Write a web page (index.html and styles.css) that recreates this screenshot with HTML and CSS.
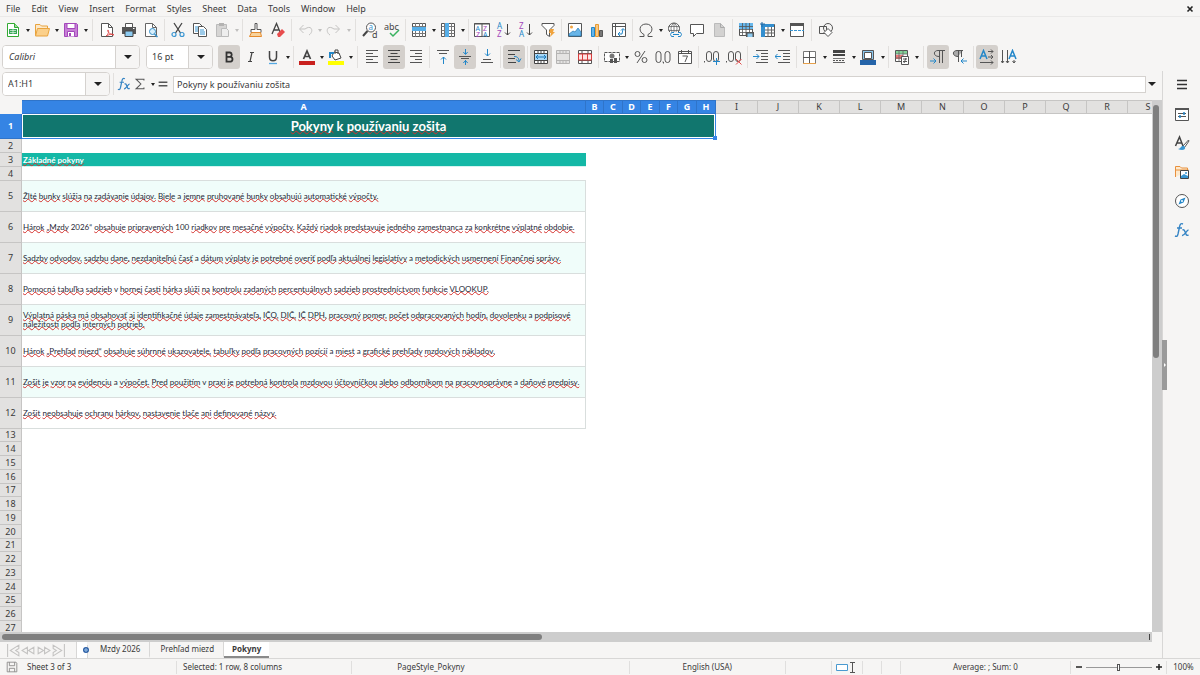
FILE: index.html
```html
<!DOCTYPE html>
<html lang="en">
<head>
<meta charset="utf-8">
<title>Pokyny</title>
<link rel="stylesheet" href="styles.css">
</head>
<body>
<svg class="sprite" aria-hidden="true">
  <symbol id="new" viewBox="0 0 16 16"><path d="M2.500 1.500h7l4 4v9h-11z" fill="#fff" stroke="#3a3" /><path d="M9.500 1.500v4h4" fill="#9d9" stroke="#3a3"/><path d="M4 7h8v5H4z" fill="#35a854"/><path d="M5 8.500h6M5 10.500h6M8 7v5" stroke="#fff" stroke-width=".6"/></symbol>
  <symbol id="open" viewBox="0 0 16 16"><path d="M1.500 13V2.500H6L7.500 4h6v3" fill="#fce8c8" stroke="#e8a33d"/><path d="M3.500 6.500h12l-2 7.500H1.500z" fill="#fbd08b" stroke="#e8a33d"/></symbol>
  <symbol id="save" viewBox="0 0 16 16"><path d="M1.500 1.500h12l1 1v12h-13z" fill="#c77fd6" stroke="#a347ba"/><path d="M4 1.500h8v5H4z" fill="#fff" stroke="#a347ba"/><path d="M4.500 14.500v-5h7v5" fill="#fff" stroke="#a347ba"/><path d="M6 11h2v3H6z" fill="#a347ba"/></symbol>
  <symbol id="pdf" viewBox="0 0 16 16"><path d="M2.500 1.500h7l4 4v9h-11z" fill="#fff" stroke="#555"/><path d="M9.500 1.500v4h4" fill="none" stroke="#555"/><path d="M7 14c3-2 3-6 2-6s0 4 6 5c-2-2-6 0-7 1" fill="none" stroke="#e04b4b"/></symbol>
  <symbol id="print" viewBox="0 0 16 16"><path d="M4.500 5V1.500h7V5" fill="#fff" stroke="#555"/><path d="M1 5h14v7H1z" fill="#555"/><path d="M4 9h8v5.500H4z" fill="#8ccaf0" stroke="#444"/><path d="M12 6.500h1.500" stroke="#fff"/></symbol>
  <symbol id="preview" viewBox="0 0 16 16"><path d="M2.500 1.500h7l4 4v9h-11z" fill="#fff" stroke="#666"/><path d="M9.500 1.500v4h4" fill="none" stroke="#666"/><circle cx="9.500" cy="9.500" r="3" fill="#d8effc" stroke="#368fc9"/><path d="M11.500 12l3 3" stroke="#368fc9" stroke-width="1.500"/></symbol>
  <symbol id="cut" viewBox="0 0 16 16"><path d="M4 1l6.500 10M12 1L5.500 11" stroke="#444" fill="none" stroke-width="1.300"/><circle cx="4" cy="12.500" r="2" fill="none" stroke="#3a96d2" stroke-width="1.200"/><circle cx="12" cy="12.500" r="2" fill="none" stroke="#3a96d2" stroke-width="1.200"/></symbol>
  <symbol id="copy" viewBox="0 0 16 16"><path d="M1.500 1.500h6l3 3v7h-9z" fill="#fff" stroke="#555"/><path d="M6.500 4.500h5l3 3v7h-8z" fill="#fff" stroke="#555"/><path d="M3 5h3M3 7h3M3 9h3M8 8h4M8 10h5M8 12h5" stroke="#3a96d2"/></symbol>
  <symbol id="paste" viewBox="0 0 16 16"><path d="M2.500 2.500h10v12h-10z" fill="#d6d5d4" stroke="#bbb"/><path d="M5 1h5v3H5z" fill="#b4b3b2"/><path d="M7.500 6.500h5l2 2v6h-7z" fill="#eee" stroke="#bbb"/></symbol>
  <symbol id="brush" viewBox="0 0 16 16"><path d="M7 1.500h2v6h4v3H3v-3h4z" fill="#fff" stroke="#555"/><path d="M3.500 10.500h9l1 4h-12z" fill="#f8d39c" stroke="#e58b2d"/></symbol>
  <symbol id="clear" viewBox="0 0 16 16"><path d="M2 12L6.500 1.500 10 10M3.500 8h5" fill="none" stroke="#444" stroke-width="1.300"/><path d="M7 12l5-5 3 3-5 5H8z" fill="#e84d4d"/></symbol>
  <symbol id="undo" viewBox="0 0 16 16"><path d="M6.500 3L2.500 7l4 4M3 7h5c7-5 9 3 4 6" fill="none" stroke="#c4c3c2"/></symbol>
  <symbol id="redo" viewBox="0 0 16 16"><path d="M9.500 3l4 4-4 4M13 7H8C1 2-1 10 4 13" fill="none" stroke="#c4c3c2"/></symbol>
  <symbol id="find" viewBox="0 0 16 16"><circle cx="9" cy="5.500" r="4.500" fill="#fff" stroke="#555"/><path d="M5.500 9L1 14" stroke="#444" stroke-width="2"/><text x="6.500" y="8" font-size="8" fill="#3a96d2">a</text><text x="10" y="15.500" font-size="9" fill="#444">d</text></symbol>
  <symbol id="spell" viewBox="0 0 16 16"><text x="0" y="8" font-size="9" fill="#444">abc</text><path d="M6 11l3 3 6-6" fill="none" stroke="#38b25f" stroke-width="1.500"/></symbol>
  <symbol id="row" viewBox="0 0 16 16"><path d="M1.500 1.500h13v13h-13z" fill="#fff" stroke="#555"/><path d="M1.500 4.500h13M1.500 11.500h13M4.500 1v14M8.500 1v14M11.500 1v14" stroke="#777"/><path d="M1 5h14v4H1z" fill="#56aee8"/></symbol>
  <symbol id="col" viewBox="0 0 16 16"><path d="M1.500 1.500h13v13h-13z" fill="#fff" stroke="#555"/><path d="M1.500 4.500h13M1.500 8.500h13M1.500 11.500h13M4.500 1v14M11.500 1v14" stroke="#777"/><path d="M5 1h4v14H5z" fill="#56aee8"/></symbol>
  <symbol id="sort" viewBox="0 0 16 16"><path d="M.5 1.500h15v13H.5zM8 1v14M0 2h16" fill="#fff" stroke="#555"/><text x="1.500" y="8.500" font-size="7" fill="#2387c9">A</text><text x="9" y="8.500" font-size="7" fill="#a347ba">Z</text><text x="2" y="14.500" font-size="7" fill="#a347ba">Z</text><text x="9" y="14.500" font-size="7" fill="#2387c9">A</text></symbol>
  <symbol id="asc" viewBox="0 0 16 16"><text x="1" y="7" font-size="8" fill="#2387c9">A</text><text x="1" y="15" font-size="8" fill="#a347ba">Z</text><path d="M11.500 2v11M9 10.500l2.500 2.500 2.500-2.500" fill="none" stroke="#444"/></symbol>
  <symbol id="desc" viewBox="0 0 16 16"><text x="1" y="7" font-size="8" fill="#a347ba">Z</text><text x="1" y="15" font-size="8" fill="#2387c9">A</text><path d="M11.500 2v11M9 10.500l2.500 2.500 2.500-2.500" fill="none" stroke="#444"/></symbol>
  <symbol id="filter" viewBox="0 0 16 16"><path d="M2 1.500h12v2L9.500 8v6.500l-3-2V8L2 3.500z" fill="#fff" stroke="#555"/><path d="M10 7h4l-1 3h2l-5 5 1-4H9z" fill="#f0a33d"/></symbol>
  <symbol id="image" viewBox="0 0 16 16"><path d="M1.500 1.500h13v13h-13z" fill="#fff" stroke="#555"/><circle cx="4.500" cy="5" r="1.500" fill="#f1a340"/><path d="M2 14v-2l4-3 2 1 3-4 3 4v4z" fill="#68b5e8" stroke="#2778b5" stroke-width=".7"/></symbol>
  <symbol id="chart" viewBox="0 0 16 16"><path d="M2.500 5.500h3v9h-3z" fill="#65b5eb" stroke="#2387c9"/><path d="M6.500 2.500h3v12h-3z" fill="#f9c985" stroke="#e69a32"/><path d="M10.500 8.500h3v6h-3z" fill="#777" stroke="#555"/></symbol>
  <symbol id="pivot" viewBox="0 0 16 16"><path d="M1.500 1.500h13v13h-13z" fill="#fff" stroke="#555"/><path d="M1.500 4.500h13M4.500 1.500v13" stroke="#555"/><path d="M7 12h4l1-5M10 8.500l2-2 2 2M9 10l-2 2 2 2" fill="none" stroke="#2387c9"/></symbol>
  <symbol id="omega" viewBox="0 0 16 16"><path d="M1.500 14.500H6v-2C0 10 1 2 8 2s8 8 2 10.500v2h4.500" fill="none" stroke="#555"/></symbol>
  <symbol id="link" viewBox="0 0 16 16"><circle cx="7" cy="6.500" r="5.500" fill="#fff" stroke="#555"/><path d="M1.500 4.500h11M1.500 8.500h11M7 1v11M7 1C3 4 3 9 7 12M7 1c4 3 4 8 0 11" fill="none" stroke="#666" stroke-width=".8"/><path d="M2 10h14v5H2z" fill="#f6f5f4"/><path d="M7 10.500H4.500q-2 2 0 4H7M11 10.500h2.500q2 2 0 4H11M6 12.500h6" fill="none" stroke="#2387c9"/></symbol>
  <symbol id="comment" viewBox="0 0 16 16"><path d="M1.500 2.500h13v9h-7L4.500 14.500v-3h-3z" fill="#fff" stroke="#555"/></symbol>
  <symbol id="page" viewBox="0 0 16 16"><path d="M3.500 1.500h6l4 4v9h-10z" fill="#d3d2d1" stroke="#bbb"/><path d="M9.500 1.500v4h4" fill="none" stroke="#aaa"/></symbol>
  <symbol id="parea" viewBox="0 0 16 16"><path d="M1.500 1.500h13v12h-13z" fill="#fff" stroke="#555"/><path d="M1 1h14v6H1z" fill="#67b7ec"/><path d="M1 4.500h14M1 7.500h14M1 10.500h14M4.500 1v13M8 1v13M11.500 1v13" stroke="#555" stroke-width=".8"/><path d="M8 10h8v5H8z" fill="#555"/><path d="M9.500 11.500h5V15h-5z" fill="#8ccaf0"/></symbol>
  <symbol id="freeze" viewBox="0 0 16 16"><path d="M1.500 2.500h13v12h-13z" fill="#fff" stroke="#555"/><path d="M1 2h13v3H1zM1 2h4v13H1z" fill="#348fcf"/><path d="M5 8h10M5 11h10M8 5v10M11.500 5v10" stroke="#666"/><path d="M2 0v5M0 2h5" stroke="#2068a5"/></symbol>
  <symbol id="split" viewBox="0 0 16 16"><path d="M1.500 1.500h13v13h-13z" fill="#fff" stroke="#555"/><path d="M1 1h14v3H1z" fill="#555"/><path d="M1 8.500h14" stroke="#3a96d2" stroke-dasharray="3 1"/></symbol>
  <symbol id="shapes" viewBox="0 0 16 16"><circle cx="10" cy="6" r="4.500" fill="#f6f5f4" stroke="#555"/><path d="M1.500 4.500h7v7h-7z" fill="none" stroke="#555"/><path d="M10 6.500l4 4-4 4-4-4z" fill="#fff" stroke="#555"/></symbol>
  <symbol id="bold" viewBox="0 0 16 16"><path d="M5.500 3.500H9a2.200 2.200 0 010 4.300H5.500zM5.500 7.800h4a2.500 2.500 0 010 4.900h-4z" fill="none" stroke="#333" stroke-width="1.800"/></symbol>
  <symbol id="italic" viewBox="0 0 16 16"><path d="M7 3.500h4M5 12.500h4M9 3.500l-2 9" fill="none" stroke="#444" stroke-width="1.200"/></symbol>
  <symbol id="under" viewBox="0 0 16 16"><path d="M4.500 2v6c0 5 7 5 7 0V2" fill="none" stroke="#444" stroke-width="1.500"/><path d="M4 14.500h8" stroke="#55a9e3" stroke-width="1.300"/></symbol>
  <symbol id="fcolor" viewBox="0 0 16 16"><path d="M4.500 10L8 2l3.500 8M6 7.500h4" fill="none" stroke="#444" stroke-width="1.700"/><path d="M0 12h16v4H0z" fill="#c9211e"/></symbol>
  <symbol id="hcolor" viewBox="0 0 16 16"><path d="M6 3l5 1 2 5-6 2-3-4z" fill="#fff" stroke="#444"/><path d="M7 5V1h3v4" fill="none" stroke="#444"/><path d="M2 9V4h4" fill="none" stroke="#2387c9" stroke-width="2"/><path d="M0 12h16v4H0z" fill="#ff0"/></symbol>
  <symbol id="left" viewBox="0 0 16 16"><path d="M2 1.500h12M2 4.500h7M2 7.500h12M2 10.500h7M2 13.500h12" stroke="#555"/></symbol>
  <symbol id="center" viewBox="0 0 16 16"><path d="M2 1.500h12M4.500 4.500h7M2 7.500h12M4.500 10.500h7M2 13.500h12" stroke="#444"/></symbol>
  <symbol id="right" viewBox="0 0 16 16"><path d="M2 1.500h12M7 4.500h7M2 7.500h12M7 10.500h7M2 13.500h12" stroke="#555"/></symbol>
  <symbol id="top" viewBox="0 0 16 16"><path d="M2 1.500h12M4 4.500h8" stroke="#555"/><path d="M8.500 15V8M6 10.500L8.500 8l2.500 2.500" fill="none" stroke="#2387c9"/></symbol>
  <symbol id="middle" viewBox="0 0 16 16"><path d="M2 7.500h12M4 9.500h8" stroke="#555"/><path d="M8.500 0v5M6.300 3l2.200 2.500L10.700 3M8.500 16v-5M6.300 14l2.200-2.500 2.200 2.500" fill="none" stroke="#2387c9"/></symbol>
  <symbol id="bottom" viewBox="0 0 16 16"><path d="M4 10.500h8M2 13.500h12" stroke="#555"/><path d="M8.500 0v7M6 4.500L8.500 7 11 4.500" fill="none" stroke="#2387c9"/></symbol>
  <symbol id="wrap" viewBox="0 0 16 16"><path d="M2 1.500h12M2 5.500h7M2 9.500h7M2 13.500h8" stroke="#444"/><path d="M8 7.500c3 0 5 1 5 5M10 10.500l3 2.500 2-3.500" fill="none" stroke="#2387c9"/></symbol>
  <symbol id="merge" viewBox="0 0 16 16"><path d="M1.500 1.500h13v13h-13zM1.500 4.500h13M1.500 11.500h13M5 1v3M8 1v3M11 1v3M5 12v3M8 12v3M11 12v3" fill="#fff" stroke="#444"/><path d="M2 5h12v6H2z" fill="#a6d7f8"/><path d="M3 8h10M5 6L3 8l2 2M11 6l2 2-2 2" fill="none" stroke="#1977b8"/></symbol>
  <symbol id="merged" viewBox="0 0 16 16"><path d="M1.500 1.500h13v13h-13zM1.500 4.500h13M1.500 11.500h13M5 1v3M8 1v3M11 1v3M5 12v3M8 12v3M11 12v3" fill="#e4e3e2" stroke="#b5b4b3"/></symbol>
  <symbol id="unmerge" viewBox="0 0 16 16"><path d="M1.500 1.500h13v13h-13zM1.500 4.500h13M1.500 11.500h13M5 1v3M11 1v3M5 12v3M11 12v3" fill="#fff" stroke="#555"/><path d="M1.500 5h13v6h-13zM5.500 5v6M10.500 5v6" fill="#fde4e4" stroke="#d93d3d"/></symbol>
  <symbol id="money" viewBox="0 0 16 16"><path d="M.5 3.500h15v9H.5z" fill="#fff" stroke="#555" stroke-dasharray="3 1"/><circle cx="8" cy="7" r="2.500" fill="#777"/><path d="M6 10h3v4H6zM10 9h3v5h-3z" fill="#555"/></symbol>
  <symbol id="percent" viewBox="0 0 16 16"><circle cx="4.500" cy="5" r="2.500" fill="none" stroke="#555"/><circle cx="11.500" cy="11" r="2.500" fill="none" stroke="#555"/><path d="M12 2L4 14" stroke="#555"/></symbol>
  <symbol id="number" viewBox="0 0 16 16"><rect x="1" y="2.500" width="5" height="11" rx="2.500" fill="none" stroke="#555"/><rect x="10" y="2.500" width="5" height="11" rx="2.500" fill="none" stroke="#555"/><path d="M7.500 13h1v1.500" stroke="#555" fill="none"/></symbol>
  <symbol id="date" viewBox="0 0 16 16"><path d="M1.500 2.500h13v12h-13z" fill="#fff" stroke="#555"/><path d="M1 4.500h14M4.500 1v3M11.500 1v3" stroke="#555"/><path d="M5.500 7h5L8 13" fill="none" stroke="#555"/></symbol>
  <symbol id="decadd" viewBox="0 0 16 16"><path d="M.5 12v1.500" stroke="#555"/><rect x="2.500" y="2.500" width="5" height="10" rx="2.500" fill="none" stroke="#555"/><rect x="9.500" y="2.500" width="5" height="10" rx="2.500" fill="none" stroke="#555"/><path d="M9 12.500h7M12.500 9v7" stroke="#2387c9"/></symbol>
  <symbol id="decdel" viewBox="0 0 16 16"><path d="M.5 12v1.500" stroke="#555"/><rect x="2.500" y="2.500" width="5" height="10" rx="2.500" fill="none" stroke="#555"/><rect x="9.500" y="2.500" width="5" height="10" rx="2.500" fill="none" stroke="#555"/><path d="M10 10l5.500 5.500M15.500 10L10 15.500" stroke="#e34b4b"/></symbol>
  <symbol id="indent" viewBox="0 0 16 16"><path d="M3 1.500h12M8 4.500h7M8 7.500h7M8 10.500h7M3 13.500h12" stroke="#555"/><path d="M0 7.500h6M3.500 5L6 7.500 3.500 10" fill="none" stroke="#2387c9"/></symbol>
  <symbol id="outdent" viewBox="0 0 16 16"><path d="M3 1.500h12M8 4.500h7M8 7.500h7M8 10.500h7M3 13.500h12" stroke="#555"/><path d="M0 7.500h6M2.500 5L0 7.500 2.500 10" fill="none" stroke="#2387c9"/></symbol>
  <symbol id="borders" viewBox="0 0 16 16"><path d="M1.500 2.500h12v12h-12z" fill="#fff" stroke="#777"/><path d="M7.500 2v12M1 8.500h12" stroke="#555"/><path d="M1 14.500h13" stroke="#e6a04a"/></symbol>
  <symbol id="lines" viewBox="0 0 16 16"><path d="M2 2.500h12" stroke="#444" stroke-width="3"/><path d="M2 6h12" stroke="#444" stroke-width="2"/><path d="M2 9.500h12" stroke="#777"/><path d="M2 11.500h12" stroke="#555" stroke-dasharray="2 1"/><path d="M2 13.500h12" stroke="#666"/></symbol>
  <symbol id="bcolor" viewBox="0 0 16 16"><path d="M2.500 1.500h11v9h-11z" fill="#8bc8ef" stroke="#555"/><path d="M4.500 3.500h7v6h-7z" fill="#fff" stroke="#555"/><path d="M0 11h16v5H0z" fill="#2564a9"/></symbol>
  <symbol id="cond" viewBox="0 0 16 16"><path d="M1.500 1.500h12v11h-12z" fill="#fff" stroke="#555"/><path d="M2 2h11v3H2z" fill="#83d599"/><path d="M2 6h7v4H2z" fill="#e77"/><path d="M1 5h13M1 9h13M5 1v12M9 1v12" stroke="#666" stroke-width=".8"/><path d="M7.500 7.500h7v8h-7z" fill="#fff" stroke="#555"/><path d="M9 10h4M9 12.500h4M12 9l-2 5" stroke="#555"/></symbol>
  <symbol id="ltr" viewBox="0 0 16 16"><path d="M15 1.500H8c-5 0-5 6 1 6M9.500 1.500V14M12.500 1.500V14" fill="none" stroke="#555"/><path d="M0 12h6M3.500 9.500L6 12l-2.500 2.500" fill="none" stroke="#2387c9"/></symbol>
  <symbol id="rtl" viewBox="0 0 16 16"><path d="M11 1.500H5c-5 0-5 6 1 6z" fill="#aaa"/><path d="M11 1.500H5c-5 0-5 6 1 6M6.500 1.500V13M9.500 1.500V8" fill="none" stroke="#555"/><path d="M15 12H9M11.500 9.500L9 12l2.500 2.500" fill="none" stroke="#2387c9"/></symbol>
  <symbol id="horz" viewBox="0 0 16 16"><path d="M1 10L4.500 1.500 8 10M2.500 7h4" fill="none" stroke="#2387c9" stroke-width="1.500"/><path d="M9 2.500h5M12 .5l2 2-2 2M9 8h5M12 6l2 2-2 2M1 13.500h13M12 11.500l2 2-2 2" fill="none" stroke="#555"/></symbol>
  <symbol id="vert" viewBox="0 0 16 16"><path d="M8 10l3.500-8.500L15 10M9.500 7h4" fill="none" stroke="#2387c9" stroke-width="1.500"/><path d="M1.500 1v13M0 12l1.500 2L3 12M6.500 1v13M5 12l1.500 2L8 12M13 11v3M11.500 12l1.500 2 1.500-2" fill="none" stroke="#555"/></symbol>
  <symbol id="fx" viewBox="0 0 16 16"><path d="M9 2c-2-1-3 0-3.500 3L4 12c-.5 2-1 3-3 2M3 6h5M8.500 8c2-1 2 1 3 3s1 3 3 2M14.500 8c-2 0-4 6-6.500 5.500" fill="none" stroke="#3584c4" stroke-width="1.400"/></symbol>
  <symbol id="sum" viewBox="0 0 16 16"><path d="M12.500 4V2.500h-9L9 8l-5.500 5.500h9V12" fill="none" stroke="#555" stroke-width="1.200"/></symbol>
  <symbol id="equal" viewBox="0 0 16 16"><path d="M3 6h10M3 10h10" stroke="#555" stroke-width="1.600"/></symbol>
  <symbol id="menu" viewBox="0 0 16 16"><path d="M3 3.500h10M3 7.500h10M3 11.500h10" stroke="#333" stroke-width="1.300"/></symbol>
  <symbol id="props" viewBox="0 0 16 16"><path d="M1.500 2.500h13v12h-13z" fill="#fff" stroke="#555"/><path d="M1 2h14v2H1z" fill="#555"/><path d="M4 7.500h8M4 10.500h8" stroke="#555"/><path d="M10 6v3M6 9v3" stroke="#2387c9" stroke-width="1.500"/></symbol>
  <symbol id="styles" viewBox="0 0 16 16"><path d="M1.500 11L5.500 2 9 11M3 8h5" fill="none" stroke="#444" stroke-width="1.500"/><path d="M14.500 5L9 11l1.500 1.500L15 6z" fill="#fff" stroke="#555"/><path d="M10 11c-3-1-3 3-6 3 4 2 8 1 7-2z" fill="#3a96d2"/></symbol>
  <symbol id="gallery" viewBox="0 0 16 16"><path d="M1.500 13V2.500H6L7.500 4h6v3M1.500 13V6h13" fill="#fde9cd" stroke="#e8903d"/><path d="M6.500 6.500h8v8h-8z" fill="#fff" stroke="#444"/><path d="M7 14v-2l3-2 4 2v2z" fill="#3a96d2"/><circle cx="12" cy="9" r="1" fill="#3a96d2"/></symbol>
  <symbol id="nav" viewBox="0 0 16 16"><circle cx="8" cy="8" r="6.500" fill="#fff" stroke="#555"/><path d="M11.500 4.500L9.500 9.500l-5 2 2-5z" fill="#2387c9"/><circle cx="8" cy="8" r="1" fill="#fff"/></symbol>
  <symbol id="floppy" viewBox="0 0 16 16"><path d="M2.500 2.500h10l1 1v10h-11zM5 2.500v4h6v-4M5 13.500v-4h6v4" fill="none" stroke="#8a8988"/></symbol>
  <symbol id="addtab" viewBox="0 0 16 16"><path d="M3 0h10v16H3z" fill="#fff"/><path d="M2.500 0v16M13.500 3v13" stroke="#d8d7d6"/><circle cx="12" cy="8" r="3" fill="#2c5fa5"/><path d="M12 6v4M10 8h4" stroke="#9cc3ea"/></symbol>
</svg>

<nav class="menubar" aria-label="Main menu">
  <button>File</button><button>Edit</button><button>View</button><button>Insert</button><button>Format</button><button>Styles</button><button>Sheet</button><button>Data</button><button>Tools</button><button>Window</button><button>Help</button>
  <button class="close" aria-label="Close document"><svg viewBox="0 0 8 8"><path d="M1.500 1.500l5 5M6.500 1.500l-5 5" stroke="#222" stroke-width="1.600"/></svg></button>
</nav>

<div class="toolbar standard" role="toolbar" aria-label="Standard">
  <button class="tool" aria-label="New"><svg><use href="#new"/></svg></button><button class="drop" aria-label="New options"></button>
  <button class="tool" aria-label="Open"><svg><use href="#open"/></svg></button><button class="drop" aria-label="Recent files"></button>
  <button class="tool" aria-label="Save"><svg><use href="#save"/></svg></button><button class="drop" aria-label="Save options"></button>
  <i class="sep wide"></i>
  <button class="tool" aria-label="Export as PDF"><svg><use href="#pdf"/></svg></button>
  <button class="tool" aria-label="Print"><svg><use href="#print"/></svg></button>
  <button class="tool" aria-label="Print preview"><svg><use href="#preview"/></svg></button>
  <i class="sep"></i>
  <button class="tool" aria-label="Cut"><svg><use href="#cut"/></svg></button>
  <button class="tool" aria-label="Copy"><svg><use href="#copy"/></svg></button>
  <button class="tool" aria-label="Paste"><svg><use href="#paste"/></svg></button><button class="drop off" aria-label="Paste options"></button>
  <i class="sep"></i>
  <button class="tool" aria-label="Clone formatting"><svg><use href="#brush"/></svg></button>
  <button class="tool" aria-label="Clear formatting"><svg><use href="#clear"/></svg></button>
  <i class="sep"></i>
  <button class="tool" aria-label="Undo"><svg><use href="#undo"/></svg></button><button class="drop off" aria-label="Undo list"></button>
  <button class="tool" aria-label="Redo"><svg><use href="#redo"/></svg></button><button class="drop off" aria-label="Redo list"></button>
  <i class="sep wide"></i>
  <button class="tool" aria-label="Find and replace"><svg><use href="#find"/></svg></button>
  <button class="tool" aria-label="Spelling"><svg><use href="#spell"/></svg></button>
  <i class="sep"></i>
  <button class="tool" aria-label="Row"><svg><use href="#row"/></svg></button><button class="drop" aria-label="Row options"></button>
  <button class="tool" aria-label="Column"><svg><use href="#col"/></svg></button><button class="drop" aria-label="Column options"></button>
  <i class="sep"></i>
  <button class="tool" aria-label="Sort"><svg><use href="#sort"/></svg></button>
  <button class="tool" aria-label="Sort ascending"><svg><use href="#asc"/></svg></button>
  <button class="tool" aria-label="Sort descending"><svg><use href="#desc"/></svg></button>
  <button class="tool" aria-label="AutoFilter"><svg><use href="#filter"/></svg></button>
  <i class="sep"></i>
  <button class="tool" aria-label="Image"><svg><use href="#image"/></svg></button>
  <button class="tool" aria-label="Chart"><svg><use href="#chart"/></svg></button>
  <button class="tool" aria-label="Pivot table"><svg><use href="#pivot"/></svg></button>
  <i class="sep"></i>
  <button class="tool" aria-label="Special character"><svg><use href="#omega"/></svg></button><button class="drop" aria-label="Character list"></button>
  <button class="tool" aria-label="Hyperlink"><svg><use href="#link"/></svg></button>
  <button class="tool" aria-label="Comment"><svg><use href="#comment"/></svg></button>
  <button class="tool" aria-label="Headers and footers"><svg><use href="#page"/></svg></button>
  <i class="sep"></i>
  <button class="tool" aria-label="Print area"><svg><use href="#parea"/></svg></button>
  <button class="tool" aria-label="Freeze"><svg><use href="#freeze"/></svg></button><button class="drop" aria-label="Freeze options"></button>
  <button class="tool" aria-label="Split window"><svg><use href="#split"/></svg></button>
  <i class="sep wide"></i>
  <button class="tool" aria-label="Draw functions"><svg><use href="#shapes"/></svg></button>
</div>

<div class="toolbar formatting" role="toolbar" aria-label="Formatting">
  <div class="combo font"><input type="text" value="Calibri" aria-label="Font name"><button class="drop large" aria-label="Font list"></button></div>
  <div class="combo size"><input type="text" value="16 pt" aria-label="Font size"><button class="drop large" aria-label="Size list"></button></div>
  <button class="tool on" aria-label="Bold"><svg><use href="#bold"/></svg></button>
  <button class="tool" aria-label="Italic"><svg><use href="#italic"/></svg></button>
  <button class="tool" aria-label="Underline"><svg><use href="#under"/></svg></button><button class="drop" aria-label="Underline options"></button>
  <i class="sep"></i>
  <button class="tool" aria-label="Font color"><svg><use href="#fcolor"/></svg></button><button class="drop" aria-label="Font colors"></button>
  <button class="tool" aria-label="Background color"><svg><use href="#hcolor"/></svg></button><button class="drop" aria-label="Background colors"></button>
  <i class="sep wide"></i>
  <button class="tool" aria-label="Align left"><svg><use href="#left"/></svg></button>
  <button class="tool on" aria-label="Center horizontally"><svg><use href="#center"/></svg></button>
  <button class="tool" aria-label="Align right"><svg><use href="#right"/></svg></button>
  <i class="sep"></i>
  <button class="tool" aria-label="Align top"><svg><use href="#top"/></svg></button>
  <button class="tool on" aria-label="Center vertically"><svg><use href="#middle"/></svg></button>
  <button class="tool" aria-label="Align bottom"><svg><use href="#bottom"/></svg></button>
  <i class="sep"></i>
  <button class="tool on" aria-label="Wrap text"><svg><use href="#wrap"/></svg></button>
  <i class="sep"></i>
  <button class="tool on" aria-label="Merge and center"><svg><use href="#merge"/></svg></button>
  <button class="tool" aria-label="Merge cells"><svg><use href="#merged"/></svg></button>
  <button class="tool" aria-label="Unmerge cells"><svg><use href="#unmerge"/></svg></button>
  <i class="sep"></i>
  <button class="tool" aria-label="Currency"><svg><use href="#money"/></svg></button><button class="drop" aria-label="Currencies"></button>
  <button class="tool" aria-label="Percent"><svg><use href="#percent"/></svg></button>
  <button class="tool" aria-label="Number"><svg><use href="#number"/></svg></button>
  <button class="tool" aria-label="Date"><svg><use href="#date"/></svg></button>
  <i class="sep"></i>
  <button class="tool" aria-label="Add decimal place"><svg><use href="#decadd"/></svg></button>
  <button class="tool" aria-label="Delete decimal place"><svg><use href="#decdel"/></svg></button>
  <i class="sep"></i>
  <button class="tool" aria-label="Increase indent"><svg><use href="#indent"/></svg></button>
  <button class="tool" aria-label="Decrease indent"><svg><use href="#outdent"/></svg></button>
  <i class="sep"></i>
  <button class="tool" aria-label="Borders"><svg><use href="#borders"/></svg></button><button class="drop" aria-label="Border list"></button>
  <button class="tool" aria-label="Border style"><svg><use href="#lines"/></svg></button><button class="drop" aria-label="Border styles"></button>
  <button class="tool" aria-label="Border color"><svg><use href="#bcolor"/></svg></button><button class="drop" aria-label="Border colors"></button>
  <i class="sep"></i>
  <button class="tool" aria-label="Conditional formatting"><svg><use href="#cond"/></svg></button><button class="drop" aria-label="Conditions"></button>
  <i class="sep wide"></i>
  <button class="tool on" aria-label="Left to right"><svg><use href="#ltr"/></svg></button>
  <button class="tool" aria-label="Right to left"><svg><use href="#rtl"/></svg></button>
  <i class="sep"></i>
  <button class="tool on" aria-label="Text direction horizontal"><svg><use href="#horz"/></svg></button>
  <button class="tool" aria-label="Text direction vertical"><svg><use href="#vert"/></svg></button>
</div>

<div class="workspace">
  <main class="document">
    <div class="formulabar">
      <div class="combo name"><input type="text" value="A1:H1" aria-label="Name box"><button class="drop large" aria-label="Named ranges"></button></div>
      <i class="sep"></i>
      <div class="formula-tools">
        <button aria-label="Function wizard"><svg><use href="#fx"/></svg></button>
        <button aria-label="Select function"><svg><use href="#sum"/></svg></button><button class="drop" aria-label="Function list"></button>
        <button aria-label="Formula"><svg><use href="#equal"/></svg></button>
      </div>
      <input class="formula" type="text" value="Pokyny k používaniu zošita" aria-label="Input line">
      <button class="drop large" aria-label="Expand formula bar"></button>
    </div>
    <div class="sheet-row">
      <div class="sheet">
        <table>
          <colgroup><col class="c-head"><col class="c-a"><col class="c-18"><col class="c-19"><col class="c-18"><col class="c-19"><col class="c-18"><col class="c-19"><col class="c-19"><col class="c-42"><col class="c-41"><col class="c-41"><col class="c-41"><col class="c-41"><col class="c-42"><col class="c-41"><col class="c-41"><col class="c-41"><col class="c-41"><col class="c-41"></colgroup>
          <thead><tr><td class="corner"></td><th class="sel">A</th><th class="sel">B</th><th class="sel">C</th><th class="sel">D</th><th class="sel">E</th><th class="sel">F</th><th class="sel">G</th><th class="sel">H</th><th>I</th><th>J</th><th>K</th><th>L</th><th>M</th><th>N</th><th>O</th><th>P</th><th>Q</th><th>R</th><th>S</th></tr></thead>
          <tbody>
            <tr class="r-title"><th class="sel">1</th><td class="title" colspan="8" data-spell>Pokyny k používaniu zošita</td></tr>
            <tr class="r-14"><th>2</th></tr>
            <tr class="r-14"><th>3</th><td class="section" data-spell>Základné pokyny</td></tr>
            <tr class="r-14"><th>4</th><td class="above"></td></tr>
            <tr class="r-note"><th>5</th><td class="note tint" data-spell>Žlté bunky slúžia na zadávanie údajov. Biele a jemne pruhované bunky obsahujú automatické výpočty.</td></tr>
            <tr class="r-note"><th>6</th><td class="note" data-spell>Hárok „Mzdy 2026“ obsahuje pripravených 100 riadkov pre mesačné výpočty. Každý riadok predstavuje jedného zamestnanca za konkrétne výplatné obdobie.</td></tr>
            <tr class="r-note"><th>7</th><td class="note tint" data-spell>Sadzby odvodov, sadzbu dane, nezdaniteľnú časť a dátum výplaty je potrebné overiť podľa aktuálnej legislatívy a metodických usmernení Finančnej správy.</td></tr>
            <tr class="r-note"><th>8</th><td class="note" data-spell>Pomocná tabuľka sadzieb v hornej časti hárka slúži na kontrolu zadaných percentuálnych sadzieb prostredníctvom funkcie VLOOKUP.</td></tr>
            <tr class="r-note"><th>9</th><td class="note tint" data-spell>Výplatná páska má obsahovať aj identifikačné údaje zamestnávateľa, IČO, DIČ, IČ DPH, pracovný pomer, počet odpracovaných hodín, dovolenku a podpisové náležitosti podľa interných potrieb.</td></tr>
            <tr class="r-note"><th>10</th><td class="note" data-spell>Hárok „Prehľad miezd“ obsahuje súhrnné ukazovatele, tabuľky podľa pracovných pozícií a miest a grafické prehľady mzdových nákladov.</td></tr>
            <tr class="r-note"><th>11</th><td class="note tint" data-spell>Zošit je vzor na evidenciu a výpočet. Pred použitím v praxi je potrebná kontrola mzdovou účtovníčkou alebo odborníkom na pracovnoprávne a daňové predpisy.</td></tr>
            <tr class="r-note"><th>12</th><td class="note" data-spell>Zošit neobsahuje ochranu hárkov, nastavenie tlače ani definované názvy.</td></tr>
            <tr class="r-13"><th>13</th></tr><tr class="r-14"><th>14</th></tr><tr class="r-14"><th>15</th></tr><tr class="r-14"><th>16</th></tr>
            <tr class="r-13"><th>17</th></tr><tr class="r-14"><th>18</th></tr><tr class="r-14"><th>19</th></tr><tr class="r-14"><th>20</th></tr>
            <tr class="r-13"><th>21</th></tr><tr class="r-14"><th>22</th></tr><tr class="r-14"><th>23</th></tr><tr class="r-14"><th>24</th></tr>
            <tr class="r-13"><th>25</th></tr><tr class="r-14"><th>26</th></tr><tr class="r-14"><th>27</th></tr>
          </tbody>
        </table>
      </div>
      <div class="vscroll"><div class="thumb"></div></div>
    </div>
    <div class="hscroll"><div class="thumb"></div><i class="stop"></i></div>
    <div class="tabs">
      <div class="tabnav">
        <button aria-label="First sheet"><svg viewBox="0 0 14 14"><path d="M1.500 1v12M12 2L4 7l8 5V9L9 7l3-2z"/></svg></button><button aria-label="Previous sheet"><svg viewBox="0 0 14 14"><path d="M6 4L1 7l5 3zM12 4L7 7l5 3z"/></svg></button><button aria-label="Next sheet"><svg viewBox="0 0 14 14"><path d="M2 4l5 3-5 3zM8 4l5 3-5 3z"/></svg></button><button aria-label="Last sheet"><svg viewBox="0 0 14 14"><path d="M12.500 1v12M2 2l8 5-8 5V9l3-2-3-2z"/></svg></button>
      </div>
      <button class="add" aria-label="Add sheet"><svg><use href="#addtab"/></svg></button>
      <button class="tab">Mzdy 2026</button><button class="tab">Prehľad miezd</button><button class="tab active">Pokyny</button>
    </div>
  </main>
  <aside class="sidebar">
    <button class="grip" aria-label="Hide sidebar"></button>
    <button aria-label="Sidebar settings"><svg><use href="#menu"/></svg></button>
    <button aria-label="Properties"><svg><use href="#props"/></svg></button>
    <button aria-label="Styles"><svg><use href="#styles"/></svg></button>
    <button aria-label="Gallery"><svg><use href="#gallery"/></svg></button>
    <button aria-label="Navigator"><svg><use href="#nav"/></svg></button>
    <button aria-label="Functions"><svg><use href="#fx"/></svg></button>
  </aside>
</div>

<footer class="status">
  <div class="s-doc"><svg><use href="#floppy"/></svg><span>Sheet 3 of 3</span></div>
  <div class="s-selected">Selected: 1 row, 8 columns</div>
  <div class="s-style">PageStyle_Pokyny</div>
  <div class="s-lang">English (USA)</div>
  <div class="s-insert"></div>
  <div class="s-mode"><svg viewBox="0 0 24 12"><path d="M1.500 3.500h11v6h-11z" fill="#fff" stroke="#4a9ad0"/><path d="M15 1.500h5M15 11.500h5M17.500 1.500v10" stroke="#555"/></svg></div>
  <div class="s-blank"></div>
  <div class="s-blank"></div>
  <div class="s-sum">Average: ; Sum: 0</div>
  <div class="s-zoom"><button aria-label="Zoom out"><svg viewBox="0 0 8 8"><path d="M1 4h6" stroke="#222" stroke-width="1.500"/></svg></button><input type="range" min="0" max="200" value="100" aria-label="Zoom"><button aria-label="Zoom in"><svg viewBox="0 0 8 8"><path d="M1 4h6M4 1v6" stroke="#222" stroke-width="1.500"/></svg></button></div>
  <div class="s-pct">100%</div>
</footer>
<script src="script.js"></script>
</body>
</html>
```

FILE: styles.css
```css
* { box-sizing: border-box; }

body {
  margin: 0;
  height: 100vh;
  display: flex;
  flex-direction: column;
  overflow: hidden;
  background: #f6f5f4;
  color: #3a3a3a;
  font-family: "Noto Sans", sans-serif;
  font-size: 9px;
  line-height: 12px;
}

button, input { font: inherit; color: inherit; }
button { border: 0; padding: 0; background: none; display: flex; align-items: center; justify-content: center; flex: none; }
input { min-width: 0; outline: 0; }
svg { width: 16px; height: 16px; display: block; flex: none; }
.sprite { display: none; }

.menubar { display: flex; align-items: center; gap: 11px; height: 17px; padding: 1px 6px 0; border-bottom: 1px solid #eae9e8; }
.menubar .close { margin-left: auto; }
.menubar .close svg { width: 8px; height: 8px; }

.toolbar { display: flex; align-items: center; height: 27px; padding: 0 0 1px 2px; }
.tool { width: 22px; height: 24px; border-radius: 3px; }
.tool.on { background: #d4d0cc; }
.drop { width: 7px; height: 22px; }
.drop::after { content: ""; border: 2px solid transparent; border-top: 3px solid #222; border-bottom: 0; }
.drop.off::after { border-top-color: #c0bfbe; }
.drop.large { width: 24px; }
.drop.large::after { border-width: 4px 4px 0; }
.sep { width: 5px; height: 22px; flex: none; display: flex; justify-content: center; }
.sep::after { content: ""; width: 1px; background: #e2e0de; }
.sep.wide { width: 7px; }

.combo { display: flex; height: 24px; border: 1px solid #d5d2cf; border-radius: 4px; background: #fff; overflow: hidden; flex: none; }
.combo input { flex: 1; border: 0; padding: 0 5px; background: #fff; }
.combo .drop { border-left: 1px solid #d5d2cf; background: #f6f5f4; }
.combo.font { width: 138px; margin-right: 6px; }
.combo.font input { font-style: italic; padding: 0 6px; }
.combo.size { width: 67px; margin-right: 5px; }
.combo.name { width: 108px; }

.workspace { flex: 1; min-height: 0; display: flex; }
.document { flex: 1; min-width: 0; display: flex; flex-direction: column; }
.formulabar { height: 29px; padding: 0 0 3px 2px; display: flex; align-items: center; flex: none; }
.formulabar > .sep { margin: 0 1px; }
.formula-tools { display: flex; align-items: center; width: 56px; }
.formula-tools button:nth-child(2) { margin: 0 2px; }
.formula-tools svg { width: 14px; height: 14px; }
.formula { flex: 1; height: 17px; border: 1px solid #d5d2cf; background: #fff; padding: 0 3px; }
.formulabar > .drop { width: 16px; padding-right: 4px; }

.sheet-row { flex: 1; min-height: 0; display: flex; }
.sheet { flex: 1; min-width: 0; overflow: hidden; background: #fff; }
table { table-layout: fixed; border-collapse: separate; border-spacing: 0; width: 1169px; line-height: 10px; }
th, td { padding: 0; }
th { background: #e2e1e0; border-right: 1px solid #c6c5c4; border-bottom: 1px solid #c6c5c4; font-weight: 400; }
thead tr { height: 14px; }
thead th { border-top: 1px solid #c6c5c4; }
th.sel { background: #3584e4; border-color: #2f74c9; color: #fff; font-weight: 700; }
.corner { background: #f6f5f4; }
.c-head { width: 22px; }
.c-a { width: 564px; }
.c-18 { width: 18px; }
.c-19 { width: 19px; }
.c-41 { width: 41px; }
.c-42 { width: 42px; }
.r-title { height: 25px; }
.r-14 { height: 14px; }
.r-13 { height: 13px; }
.r-note { height: 31px; }
.title, .section, .note { font-family: Lato, sans-serif; }
.title { position: relative; background: #11766e; color: #fff; font-size: 13px; line-height: 16px; font-weight: 700; text-align: center; border: solid #3584e4; border-width: 0 1px 1px 0; box-shadow: inset 0 0 0 1px #fff; }
.title::after { content: ""; position: absolute; right: -2px; bottom: -2px; width: 4px; height: 4px; background: #3584e4; }
.section { background: #14b8a6; background-clip: padding-box; color: #fff; font-size: 8px; font-weight: 700; padding-left: 1px; border-bottom: 1px solid #d5f4f0; }
.above { border-bottom: 1px solid #d9dedd; }
.note { font-size: 8px; line-height: 9px; color: #1f2937; padding-left: 1px; border: solid #d9dedd; border-width: 0 1px 1px 0; }
.tint { background: #f0fdfa; }
.misspelt { text-decoration: underline wavy #d5302c 1px; text-underline-offset: -1px; text-decoration-skip-ink: none; }

.vscroll { width: 10px; padding: 5px 2px 0 1px; background: #cdcdcd; }
.vscroll .thumb { width: 6px; height: 48%; border-radius: 3px; background: #7f7f7f; }
.hscroll { height: 10px; margin-right: 10px; padding: 2px; display: flex; justify-content: space-between; background: #cdcdcd; flex: none; }
.hscroll .thumb { width: 47%; height: 6px; border-radius: 3px; background: #7f7f7f; }
.hscroll .stop { width: 1px; background: #444; }

.tabs { height: 16px; display: flex; flex: none; font-size: 8px; }
.tabnav { display: flex; width: 66px; padding-left: 6px; }
.tabnav svg { width: 15px; height: 15px; fill: none; stroke: #c4c3c2; }
.add { width: 24px; margin-left: 4px; }
.add svg { width: 16px; height: 16px; }
.tab { padding: 0 9px 0 10px; border-right: 1px solid #d8d7d6; border-bottom: 2px solid transparent; }
.add + .tab { padding-left: 6px; }
.tab.active { padding: 0 8px; background: #fff; font-weight: 700; border-right: 0; border-bottom-color: #8a8a8a; }

.sidebar { position: relative; width: 38px; border-left: 1px solid #d8d7d6; display: flex; flex-direction: column; align-items: center; gap: 5px; flex: none; }
.sidebar button:not(.grip) { width: 24px; height: 24px; padding-top: 3px; }
.grip { position: absolute; left: -1px; top: calc(50% - 25px); width: 5px; height: 50px; background: #9a9a9a; }
.grip::after { content: ""; border: 2px solid transparent; border-left-color: #fff; border-right: 0; }

.status { height: 17px; display: flex; align-items: center; border-top: 1px solid #d8d7d6; flex: none; font-size: 8px; }
.status > div { height: 13px; display: flex; align-items: center; justify-content: center; border-right: 1px solid #e0dfde; flex: none; }
.status > .s-doc { width: 177px; padding-left: 5px; gap: 8px; justify-content: flex-start; }
.s-doc svg { width: 14px; height: 14px; }
.status > .s-selected { flex: 181 1 0; justify-content: flex-start; padding-left: 6px; }
.status > .s-style { flex: 249 1 0; justify-content: flex-start; padding-left: 45px; }
.status > .s-lang { flex: 167 1 0; }
.status > .s-insert { width: 46px; }
.status > .s-mode { width: 31px; }
.s-mode svg { width: 24px; height: 12px; }
.status > .s-blank { width: 19px; }
.status > .s-sum { flex: 182 1 0; }
.status > .s-zoom { width: 96px; gap: 3px; }
.s-zoom svg { width: 8px; height: 8px; }
.s-zoom input { appearance: none; flex: none; width: 66px; height: 8px; margin: 0; background: linear-gradient(#999, #999) center / 100% 1px no-repeat; }
.s-zoom input::-webkit-slider-thumb { appearance: none; width: 3px; height: 7px; border: 1px solid #555; background: #fff; }
.status > .s-pct { width: 33px; border: 0; }
```

FILE: script.js
```js
// Words accepted by the English dictionary, left without a wavy line.
const known = new Set(["a", "k", "v", "100", "2026“"]);

document.querySelectorAll("[data-spell]").forEach((cell) => {
  const words = cell.textContent.split(" ");
  cell.textContent = "";
  words.forEach((word, index) => {
    if (index > 0) cell.append(" ");
    if (known.has(word)) {
      cell.append(word);
      return;
    }
    const mark = document.createElement("span");
    mark.className = "misspelt";
    mark.textContent = word;
    cell.append(mark);
  });
});
```
